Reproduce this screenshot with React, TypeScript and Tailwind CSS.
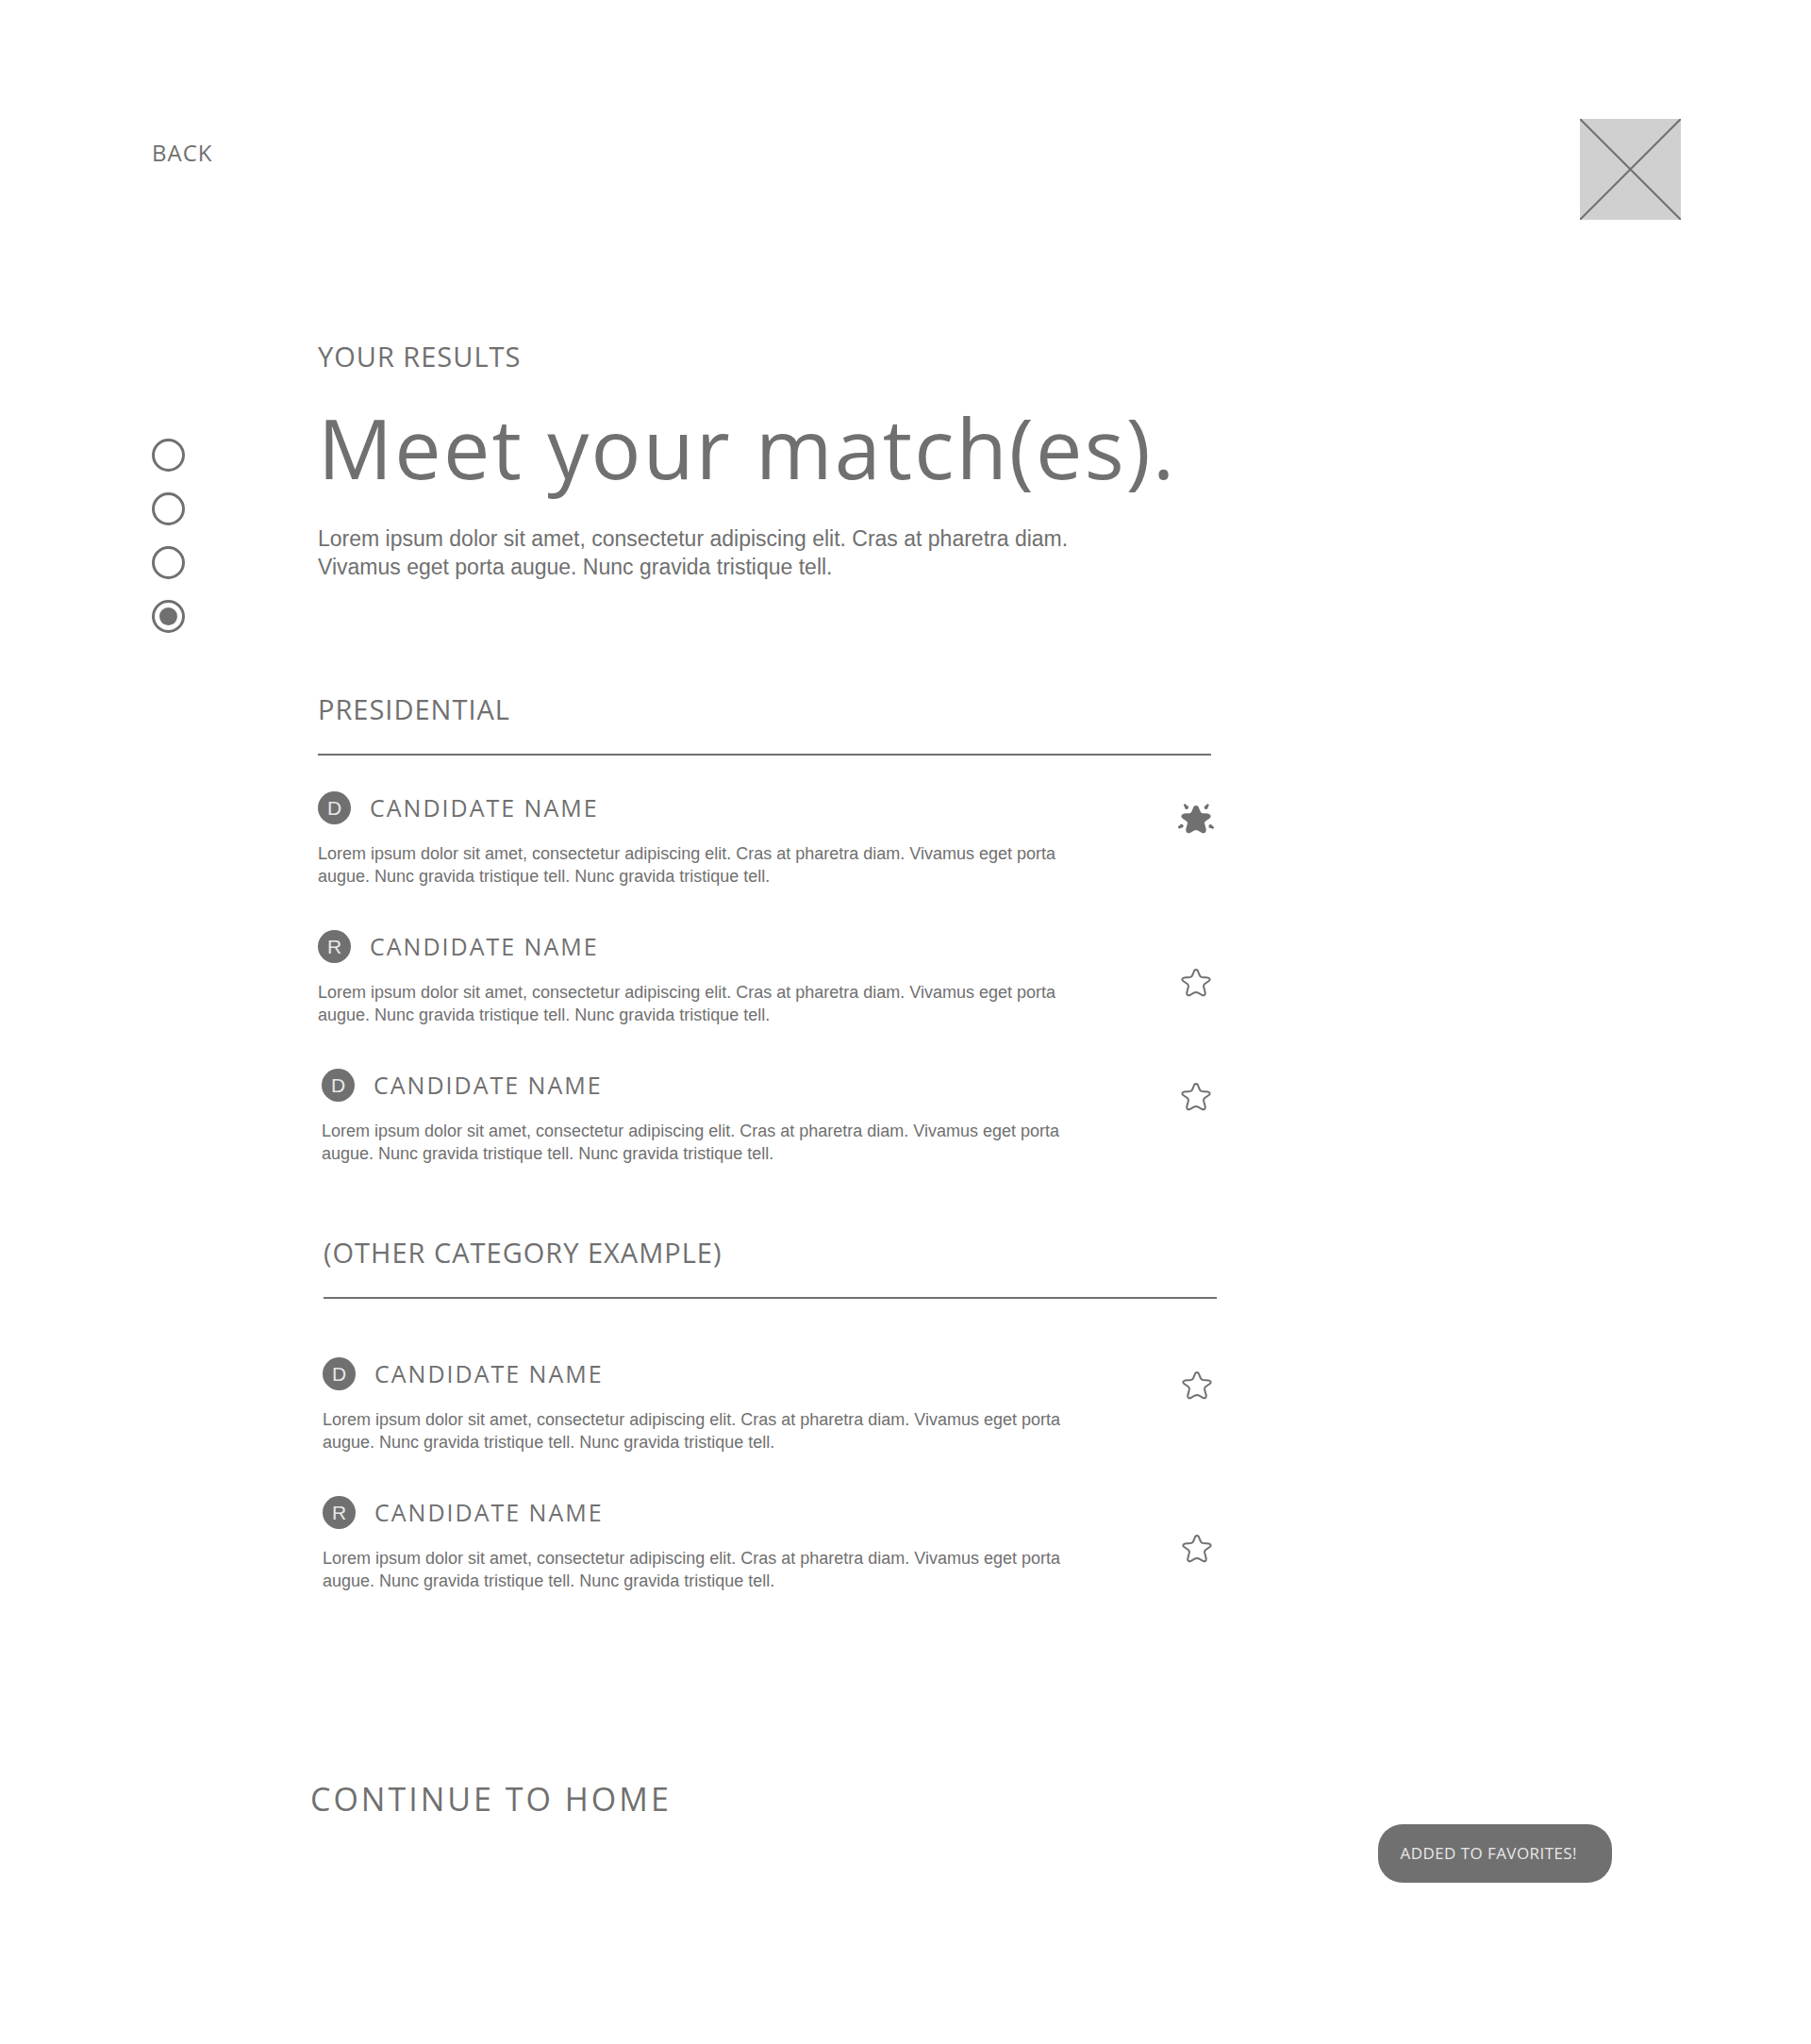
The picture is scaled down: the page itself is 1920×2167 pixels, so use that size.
import { useState } from "react";

type Party = "D" | "R";

interface Candidate {
  id: string;
  party: Party;
  starOffset: "high" | "low";
  indented?: boolean;
}

const presidential: Candidate[] = [
  { id: "p1", party: "D", starOffset: "high" },
  { id: "p2", party: "R", starOffset: "low" },
  { id: "p3", party: "D", starOffset: "high", indented: true },
];

const otherCategory: Candidate[] = [
  { id: "o1", party: "D", starOffset: "high" },
  { id: "o2", party: "R", starOffset: "low" },
];

const STAR_PATH =
  "M144 84C148 84 150 87 151 91L155 101C156.500 105.500 159 107.500 163 108L181 109.500C188 110.500 190 116 185 120L172 129C168.500 132 167.500 134.500 168.500 139L173 156C174.500 164 169 168 163 164.500L151 158C146.500 155.500 141.500 155.500 137 158L125 164.500C119 168 113.500 164 115 156L119.500 139C120.500 134.500 119.500 132 116 129L103 120C98 116 100 110.500 107 109.500L125 108C129 107.500 131.500 105.500 133 101L137 91C138 87 140 84 144 84Z";

function Star({ active }: { active: boolean }) {
  return (
    <svg viewBox="87 72 114 102" className="h-[34px] w-[38px]" aria-hidden="true">
      <path
        d={STAR_PATH}
        fill={active ? "currentColor" : "none"}
        stroke="currentColor"
        strokeWidth="6"
        strokeLinejoin="round"
      />
      {active && (
        <g stroke="currentColor" strokeWidth="8" strokeLinecap="round" fill="currentColor">
          <path d="M109 80L114 87M181 80L176 87M91 150L98 146M197 151L190 147" />
          <g stroke="none">
            <circle cx="114" cy="87" r="6" />
            <circle cx="176" cy="87" r="6" />
            <circle cx="98" cy="146" r="6" />
            <circle cx="190" cy="147" r="6" />
          </g>
        </g>
      )}
    </svg>
  );
}

function SectionTitle({ children }: { children: string }) {
  return <h2 className="text-[29px] leading-10 tracking-[1px]">{children}</h2>;
}

function CandidateRow({
  candidate,
  favorite,
  onToggle,
}: {
  candidate: Candidate;
  favorite: boolean;
  onToggle: () => void;
}) {
  return (
    <li
      className={
        candidate.indented
          ? "flex items-start justify-between pl-1"
          : "flex items-start justify-between"
      }
    >
      <div>
        <div className="flex items-center gap-5">
          <span className="flex size-[35px] items-center justify-center rounded-full bg-[#707070] font-['Liberation_Sans',Arial,sans-serif] text-[21px] text-[#e8e8e8]">
            {candidate.party}
          </span>
          <h3 className="text-[25px] leading-[35px] tracking-[2px]">CANDIDATE NAME</h3>
        </div>
        <p className="mt-[19px] max-w-[800px] font-['Liberation_Sans',Arial,sans-serif] text-lg leading-6">
          Lorem ipsum dolor sit amet, consectetur adipiscing elit. Cras at pharetra diam. Vivamus eget porta
          augue. Nunc gravida tristique tell. Nunc gravida tristique tell.
        </p>
      </div>
      <button
        type="button"
        aria-label="Favorite"
        aria-pressed={favorite}
        onClick={onToggle}
        className={
          candidate.starOffset === "high"
            ? "-mr-[3px] mt-3 shrink-0 cursor-pointer"
            : "-mr-[3px] mt-[38px] shrink-0 cursor-pointer"
        }
      >
        <Star active={favorite} />
      </button>
    </li>
  );
}

export default function App() {
  const [favorites, setFavorites] = useState<string[]>(["p1"]);
  const [step, setStep] = useState(3);

  const toggle = (id: string) =>
    setFavorites((ids) => (ids.includes(id) ? ids.filter((x) => x !== id) : [...ids, id]));

  const renderRows = (rows: Candidate[]) =>
    rows.map((c) => (
      <CandidateRow
        key={c.id}
        candidate={c}
        favorite={favorites.includes(c.id)}
        onToggle={() => toggle(c.id)}
      />
    ));

  return (
    <div className="min-h-screen bg-white pb-[171px] font-['Open_Sans','Noto_Sans',sans-serif] text-[#707070]">
      <header className="flex items-start justify-between pt-[126px] pr-[138px] pl-[161px]">
        <a href="#back" className="mt-5 text-2xl leading-8 tracking-[1px]">
          BACK
        </a>
        <svg viewBox="0 0 107 107" className="size-[107px] bg-[#d0d0d0]" role="img" aria-label="Logo placeholder">
          <path d="M0 0L107 107M107 0L0 107" stroke="#707070" strokeWidth="2" />
        </svg>
      </header>

      <main className="flex items-start gap-[141px] pt-[125px] pr-10 pl-[161px]">
        <fieldset aria-label="Progress" className="mt-[107px] flex shrink-0 flex-col gap-[22px]">
          {[0, 1, 2, 3].map((i) => (
            <label key={i} className="relative flex size-[35px] items-center justify-center">
              <input
                type="radio"
                name="step"
                aria-label={`Step ${i + 1}`}
                checked={step === i}
                onChange={() => setStep(i)}
                className="peer size-[35px] appearance-none rounded-full border-3 border-[#707070]"
              />
              <span className="absolute hidden size-[19px] rounded-full bg-[#707070] peer-checked:block" />
            </label>
          ))}
        </fieldset>

        <div className="w-full max-w-[953px]">
          <div className="max-w-[947px]">
            <SectionTitle>YOUR RESULTS</SectionTitle>
            <h1 className="mt-4 text-[88px] leading-[120px] tracking-wide whitespace-nowrap">
              Meet your match(es).
            </h1>
            <p className="mt-[22px] max-w-[820px] font-['Liberation_Sans',Arial,sans-serif] text-[23px] leading-[30px]">
              Lorem ipsum dolor sit amet, consectetur adipiscing elit. Cras at pharetra diam. Vivamus eget
              porta augue. Nunc gravida tristique tell.
            </p>
          </div>

          <section className="mt-[116px] max-w-[947px]">
            <SectionTitle>PRESIDENTIAL</SectionTitle>
            <hr className="mt-[27px] border-t-2 border-[#707070]" />
            <ul className="mt-[38px] flex flex-col gap-[45px]">{renderRows(presidential)}</ul>
          </section>

          <section className="mt-[73px] pl-[6px]">
            <SectionTitle>(OTHER CATEGORY EXAMPLE)</SectionTitle>
            <hr className="mt-[27px] border-t-2 border-[#707070]" />
            <ul className="mt-[62px] mr-[5px] -ml-px flex flex-col gap-[45px]">{renderRows(otherCategory)}</ul>
          </section>
        </div>
      </main>

      <footer className="mt-[195px] flex items-start justify-between pr-[211px] pl-[329px]">
        <a href="#home" className="text-[34px] leading-[48px] tracking-[3px]">
          CONTINUE TO HOME
        </a>
        <div
          role="status"
          className="mt-[51px] flex h-[62px] items-center rounded-[26px] bg-[#707070] pr-[37px] pl-6 text-[17px] tracking-wide text-[#e8e8e8]"
        >
          ADDED TO FAVORITES!
        </div>
      </footer>
    </div>
  );
}
